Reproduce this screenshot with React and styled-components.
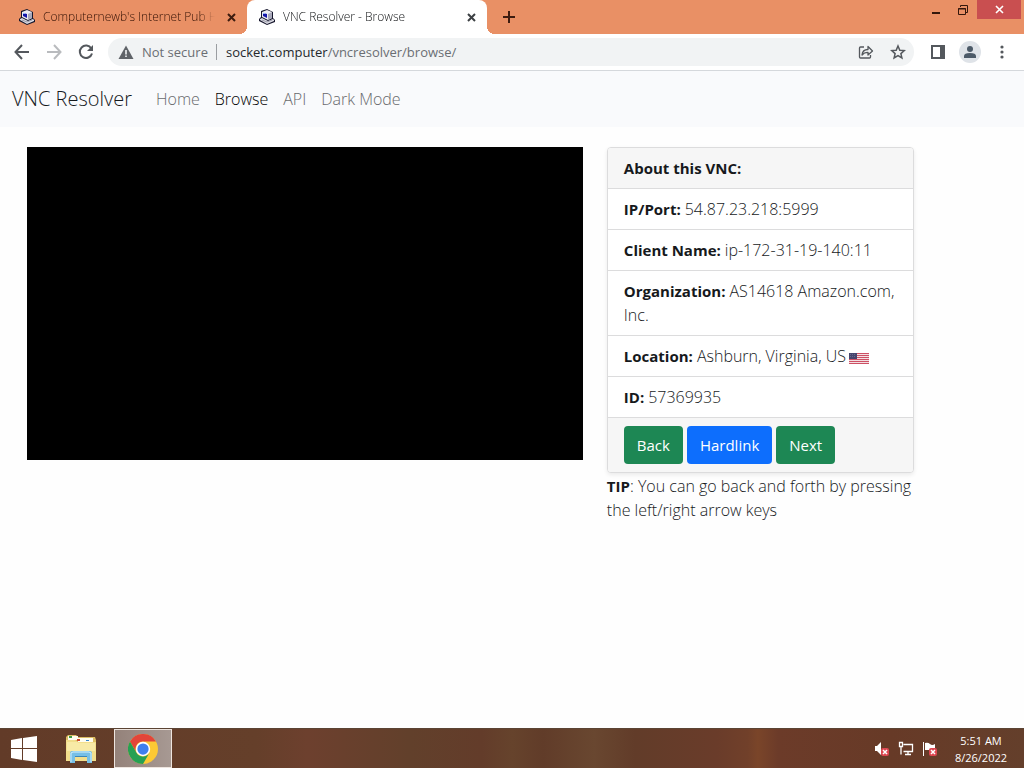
import React from "react";
import styled, { createGlobalStyle, css } from "styled-components";

const Global = createGlobalStyle`
  * { box-sizing: border-box; }
  body {
    margin: 0;
    background: #fefefe;
    color: #16191c;
    font-family: "Open Sans", "Noto Sans", sans-serif;
    font-size: 16px;
    font-weight: 300;
    line-height: 24px;
  }
  button { font: inherit; border: 0; padding: 0; background: none; color: inherit; cursor: pointer; }
  a { color: inherit; text-decoration: none; }
  svg { display: block; flex: none; }
`;

const Desktop = styled.div`
  min-height: 100vh;
  display: flex;
  flex-direction: column;
`;

/* browser window frame */

const TitleBar = styled.div`
  display: flex;
  align-items: flex-start;
  height: 34px;
  padding-left: 7px;
  background: #e99065;
`;

const Tab = styled.div`
  position: relative;
  display: flex;
  align-items: center;
  gap: 8px;
  flex: 0 1 240px;
  min-width: 0;
  height: 34px;
  padding: 0 8px 0 12px;
  font-size: 12px;
  line-height: 16px;
  color: ${(p) => (p.$active ? "#111315" : "#351205")};
  ${(p) =>
    p.$active &&
    css`
      background: #fff;
      border-radius: 8px 8px 0 0;
      &::before,
      &::after {
        content: "";
        position: absolute;
        bottom: 0;
        width: 8px;
        height: 8px;
      }
      &::before {
        right: 100%;
        background: radial-gradient(circle at 0 0, transparent 8px, #fff 8px);
      }
      &::after {
        left: 100%;
        background: radial-gradient(circle at 100% 0, transparent 8px, #fff 8px);
      }
    `}
`;

const TabTitle = styled.span`
  flex: 1;
  min-width: 0;
  overflow: hidden;
  white-space: nowrap;
  mask-image: linear-gradient(to right, #000 calc(100% - 16px), transparent);
`;

const TabClose = styled.button`
  width: 16px;
  height: 16px;
  display: grid;
  place-items: center;
  color: ${(p) => (p.$active ? "#3c4043" : "#3d1c10")};
`;

const NewTab = styled.button`
  width: 28px;
  height: 34px;
  margin-left: 8px;
  display: grid;
  place-items: center;
  color: #3d1c10;
`;

const WindowControls = styled.div`
  display: flex;
  gap: 1px;
  margin-left: auto;
  padding-right: 3px;
`;

const WindowButton = styled.button`
  width: ${(p) => (p.$close ? 44 : 26)}px;
  height: 19px;
  display: grid;
  place-items: center;
  color: ${(p) => (p.$close ? "#fff" : "#33170c")};
  background: ${(p) => (p.$close ? "#c94f50" : "transparent")};
`;

const Toolbar = styled.div`
  display: flex;
  align-items: center;
  height: 37px;
  padding: 0 6px;
  background: #fff;
  border-bottom: 1px solid #d5d8dc;
`;

const ToolButton = styled.button`
  width: 32px;
  height: 28px;
  display: grid;
  place-items: center;
  color: ${(p) => (p.$dim ? "#b9bbbe" : "#54585d")};
`;

const Omnibox = styled.div`
  flex: 1;
  min-width: 0;
  display: flex;
  align-items: center;
  height: 28px;
  margin: 0 8px 0 6px;
  padding-left: 10px;
  border-radius: 14px;
  background: #f1f3f4;
  font-size: 13px;
  font-weight: 400;
  line-height: 20px;
  color: #6a6e73;
`;

const Security = styled.button`
  display: flex;
  align-items: center;
  gap: 8px;
  padding-right: 8px;
  white-space: nowrap;
  border-right: 1px solid #9a9da1;
  height: 16px;
`;

const Address = styled.div`
  flex: 1;
  min-width: 0;
  padding-left: 9px;
  white-space: nowrap;
  overflow: hidden;
  b { font-weight: 400; color: #25282c; }
`;

/* page */

const Navbar = styled.nav`
  display: flex;
  align-items: center;
  height: 56px;
  padding: 0 12px;
  gap: 24px;
  background: #f9fafc;
`;

const Brand = styled.a`
  font-size: 20px;
  line-height: 32px;
`;

const NavLinks = styled.div`
  display: flex;
  gap: 15px;
`;

const NavLink = styled.a`
  color: ${(p) => (p.$active ? "#000" : "#68696c")};
`;

const Main = styled.main`
  flex: 1;
  display: grid;
  grid-template-columns: 7fr 4fr 1fr;
  align-items: start;
  padding: 20px 15px;
`;

const Column = styled.div`
  min-width: 0;
  padding: 0 12px;
`;

const Screen = styled.canvas`
  display: block;
  width: 100%;
  aspect-ratio: 16 / 9;
  background: #000;
`;

const Card = styled.section`
  border: 1px solid #dcdcdd;
  border-radius: 4px;
  background: #fff;
  box-shadow: 0 2px 4px rgba(0, 0, 0, 0.08);
  overflow: hidden;
  margin-bottom: 1px;
`;

const CardHeader = styled.h2`
  margin: 0;
  padding: 8px 16px;
  font-size: 15px;
  font-weight: 700;
  background: #f6f6f6;
`;

const Facts = styled.dl`
  margin: 0;
`;

const Fact = styled.div`
  padding: 8px 16px;
  border-top: 1px solid #dcdcdd;
  dt { display: inline; font-size: 15px; font-weight: 700; margin-right: 4px; }
  dd { display: inline; margin: 0; }
  svg { display: inline-block; vertical-align: -2px; margin-left: 3px; }
`;

const CardFooter = styled.div`
  display: flex;
  gap: 4px;
  padding: 8px 16px;
  border-top: 1px solid #dcdcdd;
  background: #f6f6f6;
`;

const Button = styled.button`
  height: 38px;
  padding: 0 13px;
  border-radius: 4px;
  font-size: 15px;
  font-weight: 400;
  color: #fff;
  background: ${(p) => (p.$primary ? "#0d6efd" : "#1d8754")};
`;

const Tip = styled.p`
  margin: 0;
  strong { font-size: 15px; font-weight: 700; }
`;

/* taskbar */

const Taskbar = styled.footer`
  display: flex;
  align-items: stretch;
  height: 40px;
  color: #fff;
  border-top: 1px solid #5b4434;
  background: linear-gradient(
    to right,
    #623b28 0%,
    #653f2a 25%,
    #6d402e 30%,
    #62402b 40%,
    #633c2a 47%,
    #66432c 50%,
    #613c29 53%,
    #694730 58%,
    #623c29 62%,
    #6a3c2a 70%,
    #71402a 73%,
    #7a4529 74%,
    #6c3b29 76%,
    #673a27 87%,
    #643f2b 100%
  );
`;

const TaskButton = styled.button`
  width: ${(p) => p.$width}px;
  display: grid;
  place-items: center;
  ${(p) =>
    p.$active &&
    css`
      border: 1px solid #eee5df;
      background: linear-gradient(to right, #94827a, #a79993);
    `}
`;

const Tray = styled.div`
  display: flex;
  align-items: center;
  gap: 8px;
  margin-left: auto;
  padding-right: 14px;
`;

const Clock = styled.div`
  margin-left: 6px;
  width: 58px;
  text-align: center;
  font-size: 11px;
  font-weight: 400;
  line-height: 17px;
  white-space: nowrap;
`;

const ComputerIcon = () => (
  <svg width="16" height="16" viewBox="0 0 16 16" aria-hidden="true">
    <path d="M2 2 8 0l6 3v6l2 2v2l-8 3-8-4v-2l2-2z" fill="#16162c" />
    <path d="m3 3 5-2 5 2v6l-4 2-6-3z" fill="#ececf2" />
    <path d="m9 5 4-2v6l-4 2z" fill="#a9a9ba" />
    <path d="m4 4 4 1v4L4 7z" fill="#1616a8" />
    <path d="M4 4h2v1H4z" fill="#8fb4ff" />
    <path d="m1 10 2-1 6 3 5-2 1 1v1l-7 3-7-4z" fill="#dcdce4" />
    <path d="m3 11 5 2 5-2" stroke="#9a9aa8" fill="none" />
  </svg>
);

const CloseGlyph = ({ size = 9, width = 2 }) => (
  <svg width={size} height={size} viewBox="0 0 9 9" stroke="currentColor" strokeWidth={width} aria-hidden="true">
    <path d="m1 1 7 7m0-7-7 7" />
  </svg>
);

const Icon = ({ children, size = 16, ...rest }) => (
  <svg width={size} height={size} viewBox="0 0 16 16" fill="none" stroke="currentColor" strokeWidth="2" aria-hidden="true" {...rest}>
    {children}
  </svg>
);

const FlagUS = () => (
  <svg width="20" height="11" viewBox="0 0 20 11" role="img" aria-label="US">
    <path fill="#f3dfe2" d="M0 0h20v11H0z" />
    <path stroke="#cd5064" d="M0 .5h20M0 2.5h20M0 4.5h20M0 6.5h20M0 8.5h20M0 10.5h20" />
    <path fill="#45456d" d="M0 0h8v6H0z" />
    <path stroke="#66668c" strokeDasharray="1 1" d="M1 1.5h6M1 3.5h6" />
  </svg>
);

const WindowsLogo = () => (
  <svg width="26" height="26" viewBox="0 0 26 26" fill="#fff" aria-hidden="true">
    <path d="m0 4 11-2v10H0zM12 2l14-2v12H12zM0 13h11v11L0 22zM12 13h14v13l-14-2z" />
  </svg>
);

const ExplorerIcon = () => (
  <svg width="32" height="30" viewBox="0 0 32 30" aria-hidden="true">
    <path d="M1 3 3 1h8l2 2h17l1 3v20H1z" fill="#dcbd64" />
    <path d="M3 2h10v4H3zM13 4h15v4H13z" fill="#fffdf0" />
    <path d="M4 2h3v2H4z" fill="#3d9b45" />
    <path d="M12 5h3v2h-3z" fill="#cf4930" />
    <path d="M21 6h3v1h-3z" fill="#3a86c8" />
    <path d="M1 6h9l3 2h18v19H1z" fill="#f2de8c" />
    <path d="M2 8h10l2 1h16v8H2z" fill="#f8eaa6" />
    <path d="M5 29V19q0-2 2-2h18q2 0 2 2v10h-5v-6H10v6z" fill="#76bfe6" />
    <path d="M6 28v-9l2-1h16l2 1v9" fill="none" stroke="#d3f0fc" />
    <path d="M10 22.500h12" stroke="#3a86b8" />
  </svg>
);

const ChromeLogo = () => (
  <svg width="30" height="30" viewBox="0 0 48 48" aria-hidden="true">
    <circle cx="24" cy="24" r="24" fill="#fcc934" />
    <path d="M3.2 12A24 24 0 0 1 44.8 12H24A12 12 0 0 0 13.6 30z" fill="#e2453a" />
    <path d="M3.2 12A24 24 0 0 0 24 48L34.4 30A12 12 0 0 1 13.6 30z" fill="#26a053" />
    <circle cx="24" cy="24" r="11.5" fill="#fff" />
    <circle cx="24" cy="24" r="9" fill="#3f7fed" />
  </svg>
);

const ErrorBadge = () => (
  <g>
    <rect x="7" y="7" width="8" height="8" rx="2" fill="#dc4650" />
    <path d="m9 9 4 4m0-4-4 4" stroke="#fff" strokeWidth="1.500" />
  </g>
);

const facts = [
  { label: "IP/Port:", value: "54.87.23.218:5999" },
  { label: "Client Name:", value: "ip-172-31-19-140:11" },
  { label: "Organization:", value: "AS14618 Amazon.com, Inc." },
  { label: "Location:", value: "Ashburn, Virginia, US", flag: true },
  { label: "ID:", value: "57369935" },
];

const BrowserTab = ({ title, active }) => (
  <Tab $active={active}>
    <ComputerIcon />
    <TabTitle>{title}</TabTitle>
    <TabClose $active={active} aria-label="Close tab">
      <CloseGlyph />
    </TabClose>
  </Tab>
);

export default function App() {
  return (
    <Desktop>
      <Global />
      <TitleBar>
        <BrowserTab title="Computernewb's Internet Pub Home" />
        <BrowserTab title="VNC Resolver - Browse" active />
        <NewTab aria-label="New tab">
          <svg width="12" height="12" viewBox="0 0 12 12" stroke="currentColor" strokeWidth="2">
            <path d="M6 0v12M0 6h12" />
          </svg>
        </NewTab>
        <WindowControls>
          <WindowButton aria-label="Minimize">
            <svg width="8" height="10" viewBox="0 0 8 10">
              <path d="M0 7h8v2H0z" fill="currentColor" />
            </svg>
          </WindowButton>
          <WindowButton aria-label="Restore">
            <svg width="10" height="10" viewBox="0 0 10 10" fill="none" stroke="currentColor">
              <path d="M.5 3.5h7v6h-7zM0 4h8M2.5 2V.5h7v7H8" />
            </svg>
          </WindowButton>
          <WindowButton $close aria-label="Close">
            <CloseGlyph size={9} width={1.6} />
          </WindowButton>
        </WindowControls>
      </TitleBar>

      <Toolbar>
        <ToolButton aria-label="Back">
          <Icon><path d="M15 8H2m6-7L1.500 8 8 15" /></Icon>
        </ToolButton>
        <ToolButton $dim aria-label="Forward">
          <Icon><path d="M1 8h13M8 1l6.500 7L8 15" /></Icon>
        </ToolButton>
        <ToolButton aria-label="Reload">
          <Icon>
            <path d="M13.300 4.500A6.200 6.200 0 1 0 14 9.500" />
            <path d="M15 1v6H9z" fill="currentColor" stroke="none" />
          </Icon>
        </ToolButton>
        <Omnibox>
          <Security>
            <Icon stroke="none">
              <path d="M8 1.500 15.500 15H.5z" fill="#5f6368" />
              <path d="M7.200 6h1.600v4.500H7.200zM7.200 11.500h1.600v1.600H7.200z" fill="#f1f3f4" />
            </Icon>
            Not secure
          </Security>
          <Address>
            <b>socket.computer</b>/vncresolver/browse/
          </Address>
          <ToolButton aria-label="Share this page">
            <Icon strokeWidth="1.3">
              <path d="M6 3H2.500Q1.500 3 1.500 4v9q0 1 1 1h9q1 0 1-1v-2" />
              <path d="M4 11q.5-5.500 6-5.500V2.500L14.500 7 10 11V8.300Q6 8.300 4 11z" strokeLinejoin="round" />
            </Icon>
          </ToolButton>
          <ToolButton aria-label="Bookmark this tab">
            <Icon strokeWidth="1.500">
              <path d="m8 2 1.800 4.200 4.500.4-3.400 3 1 4.400L8 11.600 4.100 14l1-4.400-3.400-3 4.500-.4z" />
            </Icon>
          </ToolButton>
        </Omnibox>
        <ToolButton aria-label="Side panel">
          <Icon>
            <path d="M2 2h12v12H2z" />
            <path d="M10 2h4v12h-4z" fill="currentColor" stroke="none" />
          </Icon>
        </ToolButton>
        <ToolButton aria-label="Profile">
          <svg width="22" height="22" viewBox="0 0 22 22">
            <circle cx="11" cy="11" r="11" fill="#dfe3e8" />
            <circle cx="11" cy="8" r="3" fill="#4c5a68" />
            <path d="M5 17v-2q0-3 6-3t6 3v2z" fill="#4c5a68" />
          </svg>
        </ToolButton>
        <ToolButton aria-label="Menu">
          <Icon stroke="none" fill="currentColor">
            <circle cx="8" cy="3" r="1.600" />
            <circle cx="8" cy="8" r="1.600" />
            <circle cx="8" cy="13" r="1.600" />
          </Icon>
        </ToolButton>
      </Toolbar>

      <Navbar>
        <Brand href="#">VNC Resolver</Brand>
        <NavLinks>
          <NavLink href="#home">Home</NavLink>
          <NavLink href="#browse" $active>Browse</NavLink>
          <NavLink href="#api">API</NavLink>
          <NavLink href="#dark">Dark Mode</NavLink>
        </NavLinks>
      </Navbar>

      <Main>
        <Column>
          <Screen aria-label="VNC screen" />
        </Column>
        <Column>
          <Card>
            <CardHeader>About this VNC:</CardHeader>
            <Facts>
              {facts.map((f) => (
                <Fact key={f.label}>
                  <dt>{f.label}</dt>
                  <dd>
                    {f.value}
                    {f.flag && <FlagUS />}
                  </dd>
                </Fact>
              ))}
            </Facts>
            <CardFooter>
              <Button>Back</Button>
              <Button $primary>Hardlink</Button>
              <Button>Next</Button>
            </CardFooter>
          </Card>
          <Tip>
            <strong>TIP</strong>: You can go back and forth by pressing the left/right arrow keys
          </Tip>
        </Column>
      </Main>

      <Taskbar>
        <TaskButton $width={48} aria-label="Start"><WindowsLogo /></TaskButton>
        <TaskButton $width={66} aria-label="File Explorer"><ExplorerIcon /></TaskButton>
        <TaskButton $width={58} $active aria-label="Google Chrome"><ChromeLogo /></TaskButton>
        <Tray>
          <Icon stroke="none">
            <path d="M1 5h2l4-4v13l-4-4H1z" fill="#fff" />
            <ErrorBadge />
          </Icon>
          <Icon strokeWidth="1.300" stroke="#fff">
            <path d="M5.500 3.500h9v7h-9M10 10.500V13m-3 .5h6M1.500 1.500h3v4h-3zM3 5.500v8" />
          </Icon>
          <Icon stroke="none">
            <path d="M1 1h1v14H1zM3 2q3-1 5 1t5 0v6H3z" fill="#fff" />
            <ErrorBadge />
          </Icon>
          <Clock>
            5:51 AM
            <br />
            8/26/2022
          </Clock>
        </Tray>
      </Taskbar>
    </Desktop>
  );
}
